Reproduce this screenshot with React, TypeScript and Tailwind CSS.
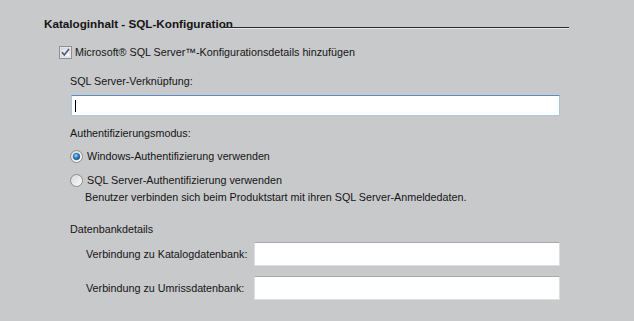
import React from "react";

const font = { fontFamily: '"Liberation Sans", Arial, sans-serif' };

function Checkbox() {
  return (
    <svg width="13" height="13" viewBox="0 0 13 13" className="shrink-0">
      <defs>
        <linearGradient id="cbg" x1="0" y1="0" x2="1" y2="1">
          <stop offset="0" stopColor="#dcdcdc" />
          <stop offset="1" stopColor="#fbfbfb" />
        </linearGradient>
      </defs>
      <rect x="0.5" y="0.5" width="12" height="12" fill="#f4f4f4" stroke="#8e8f8f" />
      <rect x="2" y="2" width="9" height="9" fill="url(#cbg)" stroke="#c4c4c4" strokeWidth="0.6" />
      <path d="M3 6.2 L5.3 9 L10 3" fill="none" stroke="#4a5a8c" strokeWidth="1.7" />
    </svg>
  );
}

function Radio({ checked }: { checked?: boolean }) {
  return (
    <svg width="13" height="13" viewBox="0 0 13 13" className="shrink-0">
      <defs>
        <linearGradient id={checked ? "rg1" : "rg0"} x1="0" y1="0" x2="1" y2="1">
          <stop offset="0" stopColor="#d6d6d6" />
          <stop offset="1" stopColor="#fdfdfd" />
        </linearGradient>
        <radialGradient id="rdot" cx="0.4" cy="0.35" r="0.7">
          <stop offset="0" stopColor="#9ee0ff" />
          <stop offset="0.5" stopColor="#2a8ad4" />
          <stop offset="1" stopColor="#0c3d7a" />
        </radialGradient>
      </defs>
      <circle cx="6.5" cy="6.5" r="6" fill={`url(#${checked ? "rg1" : "rg0"})`} stroke="#8a8a8a" />
      {checked && <circle cx="6.5" cy="6.5" r="3.3" fill="url(#rdot)" stroke="#2c4f7e" strokeWidth="0.6" />}
    </svg>
  );
}

export default function App() {
  return (
    <div
      className="w-[634px] h-[321px] bg-[#c8c9cb] text-[#151515] text-[10.75px] leading-[13px] flex flex-col overflow-hidden"
      style={font}
    >
      {/* Title */}
      <div className="mt-[17px] ml-[44px] flex items-start h-[14px]">
        <span className="text-[11.7px] leading-[14px] font-bold whitespace-nowrap">Kataloginhalt - SQL-Konfiguration</span>
      </div>
      <div className="ml-[224px] -mt-[4px] w-[345px] h-[2px] border-t border-[#2a2a2a] border-b border-b-[#e6e6e6]" />

      {/* Checkbox */}
      <div className="mt-[17px] ml-[59px] flex items-center gap-[3px] h-[13px]">
        <Checkbox />
        <span className="whitespace-nowrap">Microsoft® SQL Server™-Konfigurationsdetails hinzufügen</span>
      </div>

      <div className="mt-[16px] ml-[70px] whitespace-nowrap">SQL Server-Verknüpfung:</div>

      <div className="mt-[7px] ml-[71px] w-[489px] h-[21px] bg-white border border-[#a9c8e6] border-t-[#5c8dc2] flex items-center pl-[3px]">
        <div className="w-px h-[12px] bg-black" />
      </div>

      <div className="mt-[11px] ml-[70px] whitespace-nowrap">Authentifizierungsmodus:</div>

      <div className="mt-[10px] ml-[70px] flex items-center gap-[4px] h-[13px]">
        <Radio checked />
        <span className="whitespace-nowrap">Windows-Authentifizierung verwenden</span>
      </div>
      <div className="mt-[11px] ml-[70px] flex items-center gap-[4px] h-[13px]">
        <Radio />
        <span className="whitespace-nowrap">SQL Server-Authentifizierung verwenden</span>
      </div>
      <div className="mt-[4px] ml-[85px] whitespace-nowrap">
        Benutzer verbinden sich beim Produktstart mit ihren SQL Server-Anmeldedaten.
      </div>

      <div className="mt-[19px] ml-[70px] whitespace-nowrap">Datenbankdetails</div>

      <div className="mt-[6px] ml-[86px] flex items-center h-[24px]">
        <span className="w-[168px] whitespace-nowrap">Verbindung zu Katalogdatenbank:</span>
        <div className="w-[306px] h-[24px] bg-white border border-[#dcdde0] border-t-[#a7a8ab]" />
      </div>
      <div className="mt-[10px] ml-[86px] flex items-center h-[24px]">
        <span className="w-[168px] whitespace-nowrap">Verbindung zu Umrissdatenbank:</span>
        <div className="w-[306px] h-[24px] bg-white border border-[#dcdde0] border-t-[#a7a8ab]" />
      </div>
    </div>
  );
}
